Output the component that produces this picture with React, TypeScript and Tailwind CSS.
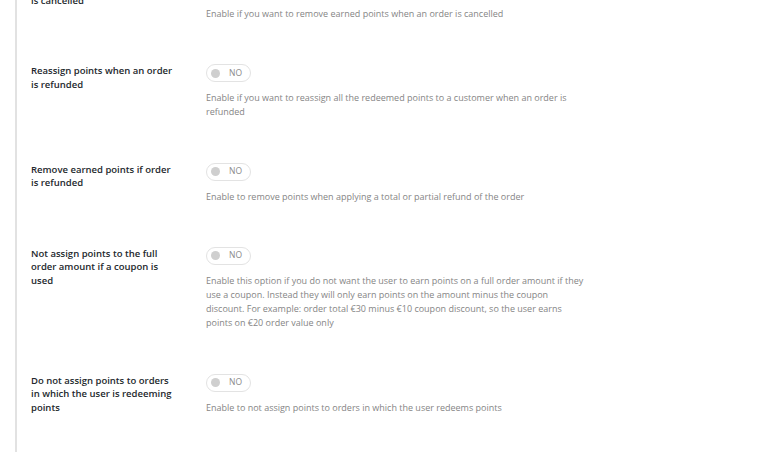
import React from "react";

interface Setting {
  label: string;
  description: string;
}

const settings: Setting[] = [
  {
    label: "Remove earned points if order is cancelled",
    description: "Enable if you want to remove earned points when an order is cancelled",
  },
  {
    label: "Reassign points when an order is refunded",
    description:
      "Enable if you want to reassign all the redeemed points to a customer when an order is refunded",
  },
  {
    label: "Remove earned points if order is refunded",
    description: "Enable to remove points when applying a total or partial refund of the order",
  },
  {
    label: "Not assign points to the full order amount if a coupon is used",
    description:
      "Enable this option if you do not want the user to earn points on a full order amount if they use a coupon. Instead they will only earn points on the amount minus the coupon discount. For example: order total €30 minus €10 coupon discount, so the user earns points on €20 order value only",
  },
  {
    label: "Do not assign points to orders in which the user is redeeming points",
    description: "Enable to not assign points to orders in which the user redeems points",
  },
];

function Toggle() {
  return (
    <div className="flex h-[18px] w-[45px] items-center gap-[9px] rounded-full border border-[#e3e3e3] bg-white pl-[4px]">
      <span className="h-[9px] w-[9px] rounded-full bg-[#cfcfcf]" />
      <span className="text-[8.5px] font-medium text-[#8a8a8a]">NO</span>
    </div>
  );
}

export default function App() {
  return (
    <div
      className="h-[452px] overflow-hidden bg-white pl-[15px]"
      style={{ fontFamily: '"Open Sans", "Noto Sans", sans-serif' }}
    >
      <div className="-mt-[42px] min-h-[520px] border-l-2 border-[#e2e2e2] pl-[14px]">
        {settings.map((s) => (
          <div key={s.label} className="flex pt-[22px] pb-[21px]">
            <div className="w-[148px] shrink-0 text-[9.5px] font-semibold leading-[13.5px] text-[#23282d]">
              {s.label}
            </div>
            <div className="ml-[27px] flex flex-col">
              <Toggle />
              <p className="mt-[9px] max-w-[382px] text-[9px] leading-[14.2px] text-[#858585]">
                {s.description}
              </p>
            </div>
          </div>
        ))}
      </div>
    </div>
  );
}
